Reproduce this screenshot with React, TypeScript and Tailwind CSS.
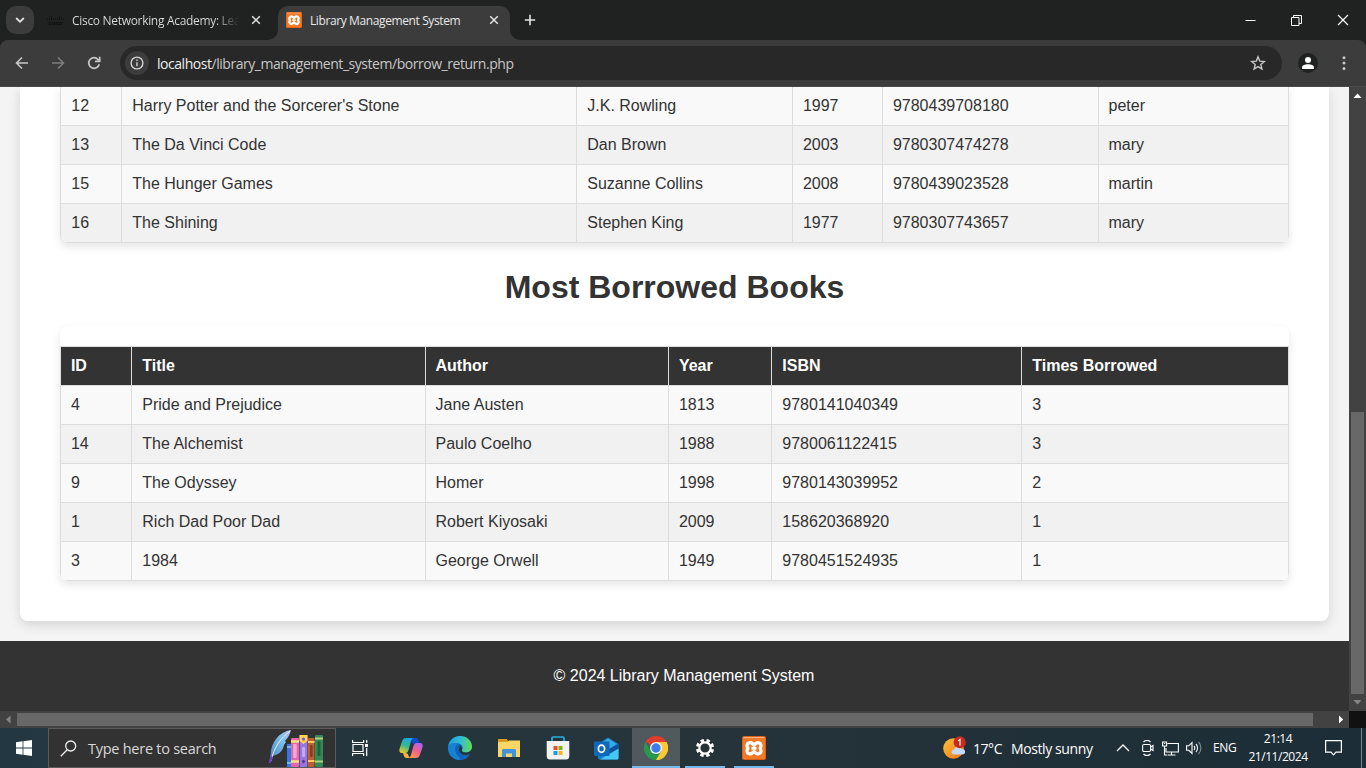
import React from "react";
import { SiCisco } from "react-icons/si";

const UI = "font-['Open_Sans','Noto_Sans',sans-serif]";

function Cross({ className = "" }: { className?: string }) {
  return (
    <svg width="10" height="10" viewBox="0 0 10 10" className={className} stroke="currentColor" strokeWidth="1.5" fill="none">
      <path d="M1.2 1.2l7.6 7.6M8.8 1.2L1.2 8.8" />
    </svg>
  );
}

function XamppIcon({ size }: { size: number }) {
  return (
    <svg width={size} height={size} viewBox="0 0 24 24" className="shrink-0" fill="none">
      <rect width="24" height="24" rx="2" fill="#d9601a" />
      <rect x="1" y="1" width="22" height="22" rx="1.500" fill="#f17a26" />
      <path d="M1.500 1.500h21" stroke="#f9b483" strokeWidth="1" />
      <path
        d="M12 9.300L10.300 7.500C8.500 6 5.400 6.700 5 9.200C4.800 10.600 5.800 11.400 5.800 12.300C5.800 13.200 4.800 14 5 15.400C5.400 17.900 8.500 18.600 10.300 17.100L12 15.300L13.700 17.100C15.500 18.600 18.600 17.900 19 15.400C19.200 14 18.200 13.200 18.200 12.300C18.200 11.400 19.200 10.600 19 9.200C18.600 6.700 15.500 6 13.700 7.500Z"
        stroke="#fff"
        strokeWidth="3.300"
        strokeLinejoin="round"
      />
      <path d="M9.500 12.300H14.500" stroke="#fff" strokeWidth="2.800" />
    </svg>
  );
}

function TitleBar() {
  return (
    <div className="flex h-10 shrink-0 items-start bg-[#202221] pt-[6px]">
      <div className="ml-[6px] flex h-7 w-7 items-center justify-center rounded-[10px] bg-[#3c3c3c]">
        <svg width="10" height="8" viewBox="0 0 10 8" fill="none" stroke="#e3e3e3" strokeWidth="1.8">
          <path d="M1.2 2L5 5.8L8.8 2" />
        </svg>
      </div>
      <div className="ml-[13px] flex h-[28px] w-[231px] items-center">
        <SiCisco size={17} color="#0b0c0c" />
        <span className="ml-[8px] w-[168px] bg-gradient-to-r from-[#dedede] from-85% to-[#202221] bg-clip-text whitespace-nowrap pt-px text-[12px] tracking-[-0.31px] text-transparent">
          Cisco Networking Academy: Lea
        </span>
        <Cross className="ml-[11px] text-[#e3e3e3]" />
      </div>
      <div className="relative flex h-[34px] w-[232px] items-start rounded-t-[10px] bg-[#3c3c3c] pl-2">
        <svg className="absolute bottom-0 -left-[10px]" width="10" height="10" viewBox="0 0 10 10">
          <path d="M10 0v10H0A10 10 0 0 0 10 0" fill="#3c3c3c" />
        </svg>
        <svg className="absolute -right-[10px] bottom-0" width="10" height="10" viewBox="0 0 10 10">
          <path d="M0 0v10h10A10 10 0 0 1 0 0" fill="#3c3c3c" />
        </svg>
        <div className="flex h-7 items-center">
          <XamppIcon size={16} />
          <span className="ml-[8px] w-[179px] whitespace-nowrap pt-px text-[12px] tracking-[-0.39px] text-[#e8e8e8]">Library Management System</span>
          <Cross className="text-[#e3e3e3]" />
        </div>
      </div>
      <svg className="mt-[8px] ml-[14px]" width="12" height="12" viewBox="0 0 12 12" stroke="#e3e3e3" strokeWidth="1.6">
        <path d="M6 .8v10.4M.8 6h10.4" />
      </svg>
      <div className="ml-auto flex h-7 items-center text-white">
        <svg width="11" height="11" viewBox="0 0 11 11"><path d="M.5 5.5h10" stroke="currentColor" /></svg>
        <svg className="ml-[35px]" width="11" height="11" viewBox="0 0 11 11" fill="none" stroke="currentColor">
          <path d="M.5 2.500h7.500v8H.5zM2.500 2.500v-2h8v8H8" />
        </svg>
        <svg className="mr-[17px] ml-[35px]" width="12" height="12" viewBox="0 0 12 12" stroke="currentColor" strokeWidth="1.2">
          <path d="M1 1l10 10M11 1L1 11" />
        </svg>
      </div>
    </div>
  );
}

function Toolbar() {
  return (
    <div className="shrink-0 bg-[#202221]">
      <div className="flex h-[47px] items-center rounded-t-[8px] border-b border-[#4a4a4a] bg-[#3c3c3c]">
        <svg className="ml-[15px]" width="14" height="14" viewBox="0 0 14 14" fill="none" stroke="#c7c7c7" strokeWidth="1.6">
          <path d="M13 7H1.8M7 1.5L1.5 7L7 12.500" />
        </svg>
        <svg className="ml-[22px]" width="14" height="14" viewBox="0 0 14 14" fill="none" stroke="#7c7c7c" strokeWidth="1.6">
          <path d="M1 7h11.2M7 1.5L12.500 7L7 12.500" />
        </svg>
        <svg className="ml-[22px]" width="14" height="14" viewBox="0 0 14 14" fill="none" stroke="#c7c7c7" strokeWidth="1.7">
          <path d="M12.200 8.200A5.300 5.300 0 1 1 11 3.500L12.300 5M12.700 .8V5.400H8" />
        </svg>
        <div className="ml-[19px] flex h-[34px] w-[1162px] items-center rounded-full bg-[#282828] pl-[5px]">
          <div className="flex h-6 w-6 items-center justify-center rounded-full bg-[#3c3c3c]">
            <svg width="14" height="14" viewBox="0 0 14 14" fill="none" stroke="#d5d5d5" strokeWidth="1.4">
              <circle cx="7" cy="7" r="5.900" />
              <path d="M7 6.200v4M7 3.500v1.500" />
            </svg>
          </div>
          <div className="ml-[8px] whitespace-nowrap text-[14px] tracking-[-0.46px] text-[#c7c7c7]">
            <span className="text-[#ededed]">localhost</span>/library_management_system/borrow_return.php
          </div>
          <svg className="mr-[16px] ml-auto" width="16" height="16" viewBox="0 0 16 16" fill="none" stroke="#c7c7c7" strokeWidth="1.400">
            <path d="M8 1.800l1.700 4.300 4.700.4-3.600 3 1.100 4.500L8 11.600 4.100 14l1.100-4.500-3.600-3 4.700-.4z" />
          </svg>
        </div>
        <div className="ml-[16px] flex h-5 w-5 items-center justify-center rounded-full bg-[#202221]">
          <svg width="12" height="12" viewBox="0 0 12 12" fill="#fff">
            <circle cx="6" cy="3" r="3" />
            <path d="M0 12v-1.500C0 8.300 3 7.200 6 7.200s6 1.100 6 3.300V12z" />
          </svg>
        </div>
        <svg className="ml-[24px]" width="4" height="14" viewBox="0 0 4 14" fill="#c7c7c7">
          <circle cx="2" cy="1.700" r="1.500" /><circle cx="2" cy="7" r="1.500" /><circle cx="2" cy="12.400" r="1.500" />
        </svg>
      </div>
    </div>
  );
}

const loans = [
  ["12", "Harry Potter and the Sorcerer's Stone", "J.K. Rowling", "1997", "9780439708180", "peter"],
  ["13", "The Da Vinci Code", "Dan Brown", "2003", "9780307474278", "mary"],
  ["15", "The Hunger Games", "Suzanne Collins", "2008", "9780439023528", "martin"],
  ["16", "The Shining", "Stephen King", "1977", "9780307743657", "mary"],
];
const popular = [
  ["4", "Pride and Prejudice", "Jane Austen", "1813", "9780141040349", "3"],
  ["14", "The Alchemist", "Paulo Coelho", "1988", "9780061122415", "3"],
  ["9", "The Odyssey", "Homer", "1998", "9780143039952", "2"],
  ["1", "Rich Dad Poor Dad", "Robert Kiyosaki", "2009", "158620368920", "1"],
  ["3", "1984", "George Orwell", "1949", "9780451524935", "1"],
];
const headings = ["ID", "Title", "Author", "Year", "ISBN", "Times Borrowed"];

const WIDE = "pl-[10.3px]";
const TIGHT = "pl-[9.9px]";
const loanPads = [WIDE, WIDE, WIDE, TIGHT, TIGHT, "pl-[9.500px]"];
const topPads = [TIGHT, WIDE, "pl-[9.500px]", TIGHT, WIDE, WIDE];

function Row({ cells, cols, pads, shade, head = false }: { cells: string[]; cols: string; pads: string[]; shade: boolean; head?: boolean }) {
  const tone = head ? "bg-[#333] font-bold text-white" : shade ? "bg-[#f1f1f1]" : "bg-[#f9f9f9]";
  return (
    <div className={`grid h-[39px] ${cols} ${tone}`}>
      {cells.map((c, i) => (
        <div key={i} className={`flex items-center border-r border-b border-[#ddd] whitespace-nowrap ${pads[i]}`}>{c}</div>
      ))}
    </div>
  );
}

function Page() {
  const loanCols = "grid-cols-[61px_455px_216px_90px_216px_190px]";
  const topCols = "grid-cols-[71px_294px_243px_103px_250px_267px]";
  return (
    <div className="flex min-w-0 flex-1 flex-col overflow-hidden bg-[#f4f4f4] font-['Liberation_Sans',Arial,sans-serif] text-[16px] leading-[24px] text-[#333]">
      <div className="mx-5 h-[534px] shrink-0 rounded-b-[8px] bg-white px-10 shadow-[0_4px_12px_rgba(0,0,0,0.13)]">
        <div className="h-[156px] overflow-hidden rounded-b-[8px] border-l border-[#ddd] shadow-[0_4px_8px_rgba(0,0,0,0.1)]">
          {loans.map((r, i) => <Row key={i} cells={r} cols={loanCols} pads={loanPads} shade={i % 2 === 1} />)}
        </div>
        <h1 className="mt-[24px] h-10 text-center text-[32px] leading-10 font-bold">Most Borrowed Books</h1>
        <div className="mt-[19px] h-[255px] overflow-hidden rounded-[8px] bg-white pt-5 shadow-[0_4px_8px_rgba(0,0,0,0.1)]">
          <div className="border-t border-l border-[#ddd]">
            <Row cells={headings} cols={topCols} pads={topPads} shade={false} head />
            {popular.map((r, i) => <Row key={i} cells={r} cols={topCols} pads={topPads} shade={i % 2 === 1} />)}
          </div>
        </div>
      </div>
      <footer className="mt-5 flex h-[70px] shrink-0 items-center justify-center bg-[#333] pl-[19px] text-white">© 2024 Library Management System</footer>
    </div>
  );
}

function VScroll() {
  return (
    <div className="flex w-[17px] shrink-0 flex-col items-center bg-[#424242]">
      <svg width="17" height="17" viewBox="0 0 17 17"><path d="M4.500 11L8.500 6.500L12.500 11z" fill="#fff" /></svg>
      <div className="mt-[308px] h-[282px] w-[13px] bg-[#686868]" />
      <svg width="17" height="17" viewBox="0 0 17 17"><path d="M4.500 6L8.500 10.500L12.500 6z" fill="#858585" /></svg>
    </div>
  );
}

function HScroll() {
  return (
    <div className="flex h-[17px] shrink-0 items-center bg-[#424242]">
      <svg width="17" height="17" viewBox="0 0 17 17"><path d="M10.500 4.500L6 8.500L10.500 12.500z" fill="#858585" /></svg>
      <div className="h-[13px] w-[1296px] bg-[#686868]" />
      <svg className="ml-auto" width="17" height="17" viewBox="0 0 17 17"><path d="M7 4.500L11.200 8.500L7 12.500z" fill="#fff" /></svg>
      <div className="h-[17px] w-[17px] bg-[#111]" />
    </div>
  );
}

function Slot({ children, line = false, active = false }: { children: React.ReactNode; line?: boolean; active?: boolean }) {
  return (
    <div className="flex h-10 w-[49px] flex-col items-center">
      <div className={`flex h-[38px] w-12 items-center justify-center pt-[2px] ${active ? "bg-[#50595d]" : ""}`}>{children}</div>
      <div className={`h-[2px] ${active ? "w-12 bg-[#76b9ed]" : line ? "w-10 bg-[#76b9ed]" : ""}`} />
    </div>
  );
}

function Books() {
  return (
    <svg width="58" height="38" viewBox="0 0 58 38">
      <defs>
        <linearGradient id="quill" x1="1" y1="0" x2="0" y2="1">
          <stop offset="0" stopColor="#b9bcf0" /><stop offset=".35" stopColor="#7cc0e8" /><stop offset=".7" stopColor="#5d9fd0" /><stop offset="1" stopColor="#6a4bd0" />
        </linearGradient>
      </defs>
      <path d="M24 1C12 3 4 13 3.500 26L2 34l2-1 2-6c8-2 10-7 11-11l2-3-1-1c3-3 5-7 6-11z" fill="url(#quill)" />
      <path d="M23 2C14 9 7 18 4 32" stroke="#e6f3fb" strokeWidth="1" fill="none" />
      <path d="M4 27l-3 8 3-2 2-5z" fill="#6b3fc8" />
      <rect x="20" y="15" width="5" height="23" fill="#3478e5" />
      <path d="M20 18h5M20 34h5" stroke="#8bc7ff" strokeWidth="1.500" />
      <rect x="24" y="9" width="8" height="29" rx="1" fill="#e267ae" />
      <rect x="26.200" y="15" width="3.500" height="14" rx="1" fill="#f6a8d2" />
      <path d="M24 12.500h8M24 32.500h8" stroke="#ffe27d" strokeWidth="2.300" />
      <rect x="32.500" y="6" width="8" height="32" rx="1" fill="#9875df" />
      <path d="M32.500 6h8v6l-4 3-4-3z" fill="#ffd257" />
      <circle cx="36.500" cy="10" r="1.600" fill="#7558b8" />
      <rect x="35" y="18" width="3.200" height="10" rx="1" fill="#c0a8f4" />
      <path d="M36.500 30.500l1.800 2-1.800 2-1.800-2z" fill="#503795" />
      <rect x="41" y="9" width="6.500" height="29" rx="1" fill="#b8602f" />
      <rect x="43" y="16" width="2.600" height="12" rx="1" fill="#8a3c1c" />
      <path d="M41 13h6.500M41 32h6.500" stroke="#ffc75c" strokeWidth="1.800" />
      <rect x="48" y="6" width="8" height="32" rx="1" fill="#358958" />
      <rect x="50.500" y="12" width="3" height="15" rx="1" fill="#1e633c" />
      <path d="M48 9.500h8M48 32.500h8" stroke="#a9d580" strokeWidth="2" />
    </svg>
  );
}

function Copilot() {
  return (
    <svg width="24" height="22" viewBox="0 0 24 22">
      <defs>
        <linearGradient id="cpA" x1=".6" y1="0" x2=".2" y2="1"><stop offset="0" stopColor="#1aa7ea" /><stop offset=".5" stopColor="#36b98e" /><stop offset="1" stopColor="#f1cf24" /></linearGradient>
        <linearGradient id="cpB" x1=".8" y1="0" x2=".2" y2="1"><stop offset="0" stopColor="#a764ed" /><stop offset=".5" stopColor="#f5608c" /><stop offset="1" stopColor="#ff9b4d" /></linearGradient>
      </defs>
      <path d="M13 1h4c1.500 0 2 1 2.500 2.500L20.500 7h-5c-2 0-2.500-2-3-4z" fill="#1549cf" />
      <path d="M7.500 1H15c-1.800 0-2.400 1.300-3 3.300L9.500 13c-.6 2-1.500 3-3.500 3H3c-2.500 0-3-2-2.500-4L3 4.500C3.800 2 5 1 7.500 1z" fill="url(#cpA)" />
      <path d="M16.500 21H9c1.800 0 2.400-1.300 3-3.300L14.500 9c.6-2 1.500-3 3.500-3h3c2.500 0 3 2 2.500 4L21 17.500c-.8 2.500-2 3.500-4.500 3.500z" fill="url(#cpB)" />
      <path d="M11 21H7.500c-1.500 0-2.200-1-2.700-2.500L4 16h2.500c2 0 2.600 1 3 2.800z" fill="#f7b33a" />
    </svg>
  );
}

function Edge() {
  return (
    <svg width="24" height="24" viewBox="0 0 24 24">
      <defs>
        <linearGradient id="edA" x1="0" y1=".4" x2="1" y2=".5"><stop offset="0" stopColor="#1e9de0" /><stop offset=".5" stopColor="#32bdd1" /><stop offset="1" stopColor="#62d957" /></linearGradient>
      </defs>
      <circle cx="12" cy="12" r="12" fill="#1164b8" />
      <path d="M.1 11C.8 4.500 6 0 12 0c7 0 12 5 12 10.500 0 4-3 6-6 6-3.500 0-4.500-1.500-4-2.500 1-1.500 1.500-5-3-6.500C7 6 1.500 7.500.1 11z" fill="url(#edA)" />
      <path d="M.1 11C1.500 7.500 7 6 11 7.500 6 9 6 16 10 20c1.500 1.600 3 2.600 5 3.600C8 25.500-.5 20.500.1 11z" fill="#1782d4" />
      <path d="M14 14c-.5 1 .5 2.500 4 2.500 2.300 0 4.600-1 6-3.500v5.500l-2.400 1C17 20.500 13 19 11.500 15.500c-.8-2-.6-4 .5-6 2 1.500 2.500 3.500 2 4.500z" fill="#25343b" />
      <path d="M10.500 12c-.6 4 3 8.500 10.500 6.500 1-.3 1.300 0 .8.600C19.500 22 16 24 12 24z" fill="#1164b8" />
    </svg>
  );
}

function Chrome() {
  return (
    <svg width="24" height="24" viewBox="0 0 24 24">
      <path d="M12 12L1.600 6a12 12 0 0 1 20.800 0z" fill="#e33b2e" />
      <path d="M12 12L22.400 6A12 12 0 0 1 12 24z" fill="#fcc934" />
      <path d="M12 6h10.400A12 12 0 0 1 12 24l5.200-9z" fill="#fcc934" />
      <path d="M1.600 6A12 12 0 0 0 12 24l5.200-9-10.400 0z" fill="#28994a" />
      <circle cx="12" cy="12" r="6" fill="#fff" /><circle cx="12" cy="12" r="4.700" fill="#3b7ded" />
    </svg>
  );
}

function Taskbar() {
  return (
    <div className="flex h-10 shrink-0 items-center bg-gradient-to-r from-[#233742] via-[#26343a] to-[#1c2d37] text-white">
      <div className="flex w-12 justify-center">
        <svg width="16" height="16" viewBox="0 0 16 16" fill="#fff"><path d="M0 2.300L6.600 1.300V7.600H0zM7.400 1.200L16 0V7.600H7.400zM0 8.400H6.600V14.700L0 13.700zM7.400 8.400H16V16L7.400 14.800z" /></svg>
      </div>
      <div className="flex h-10 w-[288px] items-center border border-[#5b5b5b] bg-[#323232] pl-[11px]">
        <svg width="17" height="17" viewBox="0 0 17 17" fill="none" stroke="#eee" strokeWidth="1.300"><circle cx="10.700" cy="6" r="5" /><path d="M7.200 9.800L.8 16.300" /></svg>
        <span className="ml-[11px] w-[179px] whitespace-nowrap pt-px text-[14.500px] tracking-[-0.26px] text-[#d8d8d8]">Type here to search</span>
        <Books />
      </div>
      <div className="mr-[2px] flex w-12 justify-center">
        <svg width="17" height="16" viewBox="0 0 17 16" fill="none" stroke="#fff" strokeWidth="1.200"><path d="M1 4.500h10v7H1zM.6 0v2.500h11V0M.6 16v-2.500h11V16M14.700 0v3M14.700 8v8" /><path d="M13 4h3v3h-3z" fill="#fff" stroke="none" /></svg>
      </div>
      <Slot><Copilot /></Slot>
      <Slot><Edge /></Slot>
      <Slot>
        <svg width="22" height="20" viewBox="0 0 22 20"><path d="M0 1h8.500l2 2H22v4H0z" fill="#d99b1c" /><path d="M0 4h9.500l1.500-1.500H22V19H0z" fill="#fbd667" /><path d="M4 19v-6.500c0-1 .6-1.500 1.500-1.500h11c.9 0 1.500.5 1.500 1.500V19h-4v-3.500H8V19z" fill="#3f94dc" /></svg>
      </Slot>
      <Slot>
        <svg width="24" height="24" viewBox="0 0 24 24"><path d="M6 6V2.200C6 1.500 6.500 1 7.200 1h9.600c.7 0 1.200.5 1.200 1.200V6" fill="none" stroke="#27aee8" strokeWidth="1.700" /><path d="M.7 5h22.600v15c0 2.500-1.200 3.500-3.300 3.500H4c-2.100 0-3.300-1-3.300-3.500z" fill="#f2f2f3" /><path d="M7.500 10h4v4h-4z" fill="#e94b2c" /><path d="M12.500 10h4v4h-4z" fill="#7bb51e" /><path d="M7.500 15h4v4h-4z" fill="#1c9be6" /><path d="M12.500 15h4v4h-4z" fill="#f9b61b" /></svg>
      </Slot>
      <Slot>
        <svg width="25" height="23" viewBox="0 0 25 23"><path d="M4 7L14 .5 24.500 7v14c0 1-.6 1.500-1.500 1.500H6c-1 0-2-.6-2-1.500z" fill="#1680cf" /><path d="M6 7L14 1.500 22.500 7 15 12z" fill="#39a9e5" /><path d="M15 12l9.500-5v6L14 20z" fill="#11509c" /><path d="M6 22.500l18.500-11V21c0 1-.6 1.500-1.500 1.500z" fill="#45c7f4" /><rect x="0" y="4.500" width="15.500" height="14.500" rx="1.200" fill="#1068bd" /><ellipse cx="7.500" cy="11.700" rx="3.100" ry="3.600" fill="none" stroke="#fff" strokeWidth="1.700" /></svg>
      </Slot>
      <Slot active><Chrome /></Slot>
      <Slot line>
        <svg width="20" height="20" viewBox="0 0 20 20" fill="none" stroke="#fff"><circle cx="10" cy="10" r="5.700" strokeWidth="2.200" /><circle cx="10" cy="10" r="7.700" strokeWidth="2.800" strokeDasharray="3.400 2.648" strokeDashoffset="-1.300" /></svg>
      </Slot>
      <Slot line><XamppIcon size={24} /></Slot>
      <div className="ml-auto flex items-center">
        <svg width="24" height="24" viewBox="0 0 24 24">
          <defs><linearGradient id="sun" x1="0" y1="0" x2="1" y2="1"><stop offset="0" stopColor="#ffc23b" /><stop offset="1" stopColor="#ed7419" /></linearGradient></defs>
          <circle cx="10.500" cy="12.500" r="10.300" fill="url(#sun)" />
          <path d="M11.500 18.500c-4 0-4-4.500-.5-4.800C12 10 17 9.500 18.500 13c4.500-.5 5 5.500.7 5.500z" fill="#c5dcf8" />
          <circle cx="16.700" cy="6.200" r="6" fill="#c52b21" />
          <path d="M15 4.900l2-1.500v6" fill="none" stroke="#fff" strokeWidth="1.100" />
        </svg>
        <span className="ml-[6px] w-[38px] whitespace-nowrap text-[14px] tracking-[-0.45px]">17°C</span>
        <span className="w-[105px] whitespace-nowrap text-[14px] tracking-[-0.4px]">Mostly sunny</span>
        <svg width="14" height="8" viewBox="0 0 14 8" fill="none" stroke="#fff" strokeWidth="1.300"><path d="M1 7l6-6 6 6" /></svg>
        <svg className="ml-[12px]" width="12" height="16" viewBox="0 0 12 16" fill="none" stroke="#fff" strokeWidth="1.100"><rect x=".6" y="4.500" width="8" height="7" rx="1.500" /><path d="M8.600 7l2.400-1.500v5L8.600 9M1.500 2C3.500 .2 6.500 .2 8.500 2M1.500 14c2 1.800 5 1.800 7 0" /></svg>
        <svg className="ml-[8px]" width="17" height="15" viewBox="0 0 17 15" fill="none" stroke="#fff" strokeWidth="1.100"><path d="M5.500 2.500h10.900v8.500H4V7M9.500 11v3M5.500 14h8M2.500 5v9H5M.6 1h4v4h-4z" /><path d="M2 2.500h1.200" /></svg>
        <svg className="ml-[7px]" width="17" height="14" viewBox="0 0 17 14" fill="none" stroke="#fff" strokeWidth="1.100"><path d="M.6 4.800h2.200L6 1.500v11L2.800 9.300H.6zM8 5c1 1 1 3 0 4M10 3c2 2 2 6 0 8" /><path d="M12.500 1c3.200 3.300 3.200 8.700 0 12" opacity=".45" /></svg>
        <span className="ml-[10px] w-[35px] whitespace-nowrap text-[12px] tracking-[-0.35px]">ENG</span>
        <div className="w-[60px] text-center text-[12px] leading-[18px] tracking-[-0.45px] whitespace-nowrap"><div>21:14</div><div>21/11/2024</div></div>
        <svg className="ml-[17px]" width="17" height="16" viewBox="0 0 17 16" fill="none" stroke="#fff" strokeWidth="1.200"><path d="M.6.6h15.800v11.600h-5.400L8.500 14.800 6 12.200H.6z" /></svg>
        <div className="mr-1 ml-[19px] h-10 w-px bg-[#76848b]" />
      </div>
    </div>
  );
}

export default function App() {
  return (
    <div className={`flex h-[768px] w-[1366px] flex-col overflow-hidden ${UI}`}>
      <TitleBar />
      <Toolbar />
      <div className="flex h-[624px] shrink-0">
        <Page />
        <VScroll />
      </div>
      <HScroll />
      <Taskbar />
    </div>
  );
}
